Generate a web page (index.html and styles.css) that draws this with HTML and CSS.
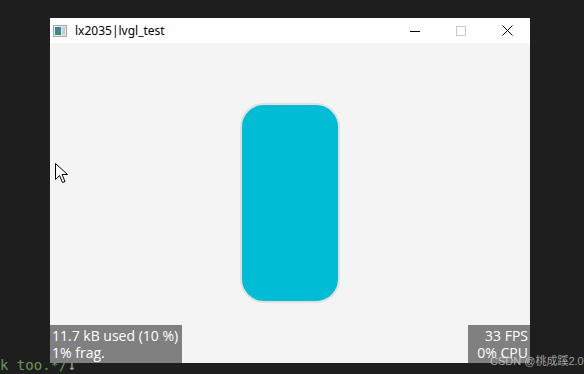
FILE: index.html
```html
<!DOCTYPE html>
<html>
<head>
<meta charset="utf-8">
<link rel="stylesheet" href="styles.css">
</head>
<body>
<div class="term-line"><span class="comment">k too.*/</span><span class="arrow">↓</span></div>
<div class="window">
  <div class="titlebar">
    <svg class="app-icon" width="14" height="12" viewBox="0 0 14 12">
      <rect x="0.5" y="0.5" width="13" height="11" fill="#e8e8e8" stroke="#a8a8a8"/>
      <rect x="2" y="2" width="6" height="8" fill="#3a8f7a"/>
      <rect x="2" y="2" width="6" height="3" fill="#4a78b8"/>
      <rect x="9" y="2" width="3" height="8" fill="#c0d0dc"/>
    </svg>
    <span class="title">lx2035|lvgl_test</span>
    <div class="controls">
      <span class="ctl"><svg width="10" height="10" viewBox="0 0 10 10"><line x1="0" y1="5.5" x2="10" y2="5.5" stroke="#000" stroke-width="1"/></svg></span>
      <span class="ctl"><svg width="10" height="10" viewBox="0 0 10 10"><rect x="0.5" y="0.5" width="9" height="9" fill="none" stroke="#c8c8c8" stroke-width="1"/></svg></span>
      <span class="ctl"><svg width="11" height="11" viewBox="0 0 11 11"><path d="M0.5 0.5 L10.5 10.5 M10.5 0.5 L0.5 10.5" stroke="#000" stroke-width="1"/></svg></span>
    </div>
  </div>
  <div class="screen">
    <div class="obj"></div>
    <div class="perf mem">11.7 kB used (10 %)<br>1% frag.</div>
    <div class="perf fps">33 FPS<br>0% CPU</div>
    <svg class="cursor" width="14" height="22" viewBox="0 0 14 22">
      <path d="M0.5 0.5 L0.5 16.5 L4.5 12.5 L7.5 19.5 L10 18.5 L7 11.5 L12.5 11.5 Z" fill="#fff" stroke="#000" stroke-width="1" stroke-linejoin="miter"/>
    </svg>
  </div>
</div>
<div class="watermark">CSDN @桃成蹊2.0</div>
</body>
</html>
```
FILE: styles.css
```css
html, body {
  margin: 0;
  padding: 0;
}
body {
  width: 584px;
  height: 374px;
  background: #1e1e1e;
  overflow: hidden;
  position: relative;
  padding-top: 18px;
  box-sizing: border-box;
}
.term-line {
  position: absolute;
  left: 0;
  top: 357px;
  font-family: "DejaVu Sans Mono", monospace;
  font-size: 14px;
  line-height: 16px;
  white-space: pre;
}
.term-line .comment { color: #6a9955; }
.term-line .arrow { color: #b0b0b0; }
.window {
  position: relative;
  margin-left: 50px;
  width: 480px;
  display: flex;
  flex-direction: column;
}
.titlebar {
  height: 25px;
  background: #ffffff;
  display: flex;
  align-items: center;
  font-family: "Segoe UI", "Noto Sans", "DejaVu Sans", sans-serif;
  font-size: 12px;
  color: #000;
}
.app-icon {
  margin-left: 3px;
  margin-right: 8px;
}
.title {
  margin-top: -1px;
}
.controls {
  margin-left: auto;
  display: flex;
  height: 100%;
}
.ctl {
  width: 46px;
  display: flex;
  align-items: center;
  justify-content: center;
}
.screen {
  position: relative;
  height: 320px;
  background: #f4f4f4;
  display: flex;
  align-items: center;
  justify-content: center;
}
.obj {
  width: 100px;
  height: 200px;
  box-sizing: border-box;
  background: #00bcd4;
  border: 2px solid #e0e0e0;
  border-radius: 24px;
}
.perf {
  position: absolute;
  bottom: 0;
  background: #808080;
  color: #ffffff;
  font-family: "Open Sans", "Noto Sans", sans-serif;
  font-size: 14px;
  line-height: 17px;
  padding: 2px;
}
.mem {
  left: 0;
  width: 128px;
}
.fps {
  right: 0;
  width: 58px;
  text-align: right;
}
.cursor {
  position: absolute;
  left: 5px;
  top: 120px;
}
.watermark {
  position: absolute;
  left: 490px;
  top: 354px;
  white-space: nowrap;
  font-family: "Liberation Sans", "Noto Sans CJK SC", sans-serif;
  font-size: 11px;
  line-height: 14px;
  color: rgba(220, 220, 220, 0.7);
}
```
